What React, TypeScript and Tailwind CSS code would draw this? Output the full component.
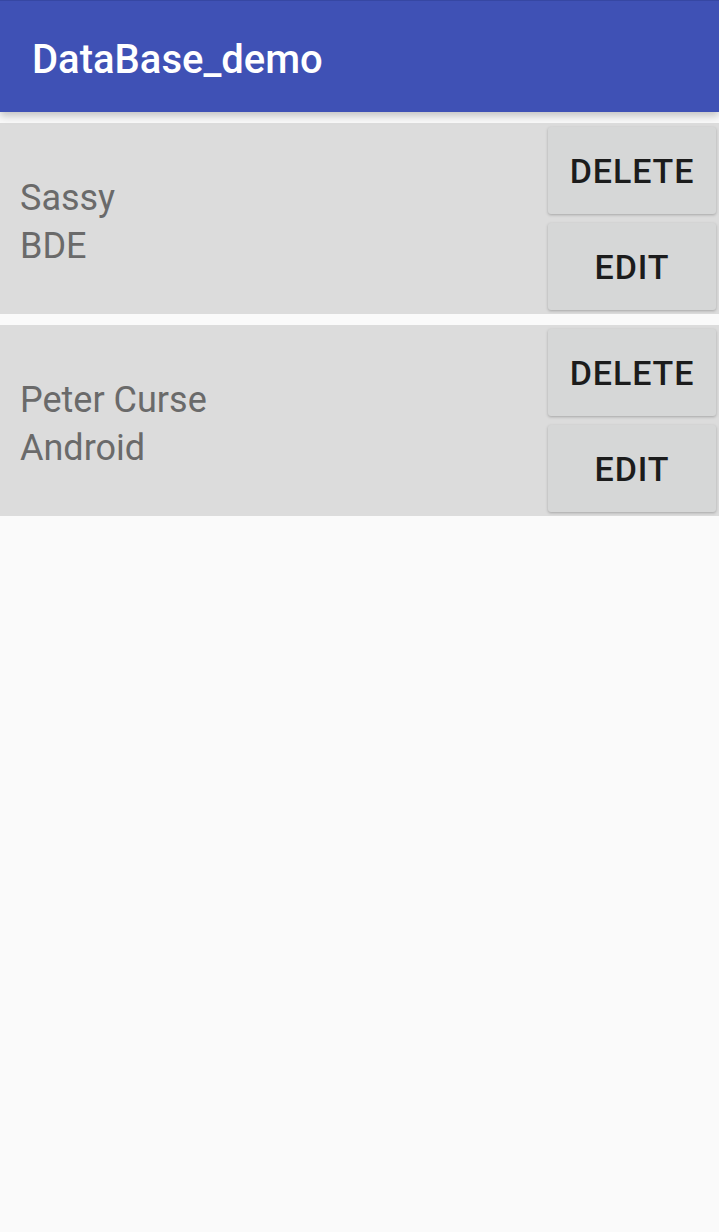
const people = [
  { name: "Sassy", role: "BDE" },
  { name: "Peter Curse", role: "Android" },
];

function ActionButton({ label }: { label: string }) {
  return (
    <button
      type="button"
      className="flex h-[87px] w-[168px] items-center justify-center rounded-[3px] bg-[#d6d7d7] pt-[2px] text-[34px] font-medium tracking-[0.9px] text-[#1c1c1c] shadow-[0_1px_3px_rgba(0,0,0,0.25)]"
    >
      {label}
    </button>
  );
}

export default function App() {
  return (
    <div className="min-h-[1232px] w-[719px] bg-[#fafafa] font-['Roboto',sans-serif]">
      {/* Barre d'application */}
      <header className="relative z-10 flex h-[112px] items-center border-t border-[#3647a3] bg-[#3f51b5] px-[32px] pt-[6px] shadow-[0_4px_8px_rgba(0,0,0,0.22)]">
        <h1 className="text-[40px] font-medium text-white">DataBase_demo</h1>
      </header>

      <div className="flex flex-col gap-[11px] pt-[11px]">
        {people.map((p) => (
          <div key={p.name} className="flex h-[191px] items-center justify-between bg-[#dcdcdc] pl-[20px] pr-[3px]">
            <div className="flex flex-col pt-[6px] text-[36px] leading-[48px] text-[#6a6a6a]">
              <span>{p.name}</span>
              <span>{p.role}</span>
            </div>
            <div className="flex flex-col gap-[9px]">
              <ActionButton label="DELETE" />
              <ActionButton label="EDIT" />
            </div>
          </div>
        ))}
      </div>
    </div>
  );
}
